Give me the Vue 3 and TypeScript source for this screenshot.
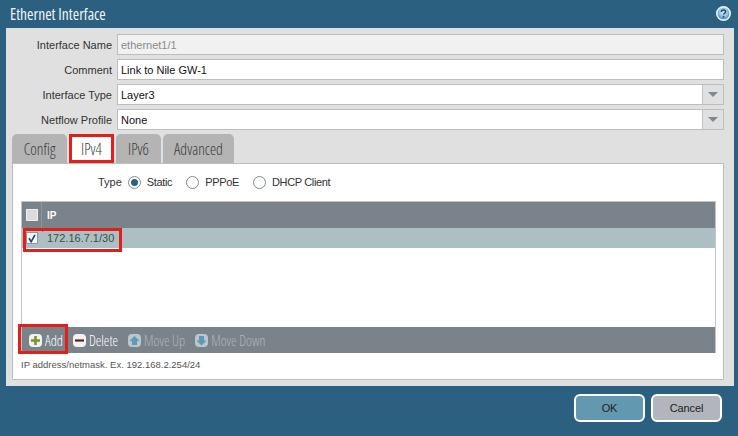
<script setup lang="ts">
const fields = [
  { label: 'Interface Name', value: 'ethernet1/1', kind: 'readonly' },
  { label: 'Comment', value: 'Link to Nile GW-1', kind: 'text' },
  { label: 'Interface Type', value: 'Layer3', kind: 'select' },
  { label: 'Netflow Profile', value: 'None', kind: 'select' },
]
const tabs = ['Config', 'IPv4', 'IPv6', 'Advanced']
const radios = [
  { label: 'Static', on: true },
  { label: 'PPPoE', on: false },
  { label: 'DHCP Client', on: false },
]
</script>

<template>
  <div class="dialog">
    <header class="title">
      <span class="narrow">Ethernet Interface</span>
      <svg class="help" width="17" height="17" viewBox="0 0 17 17">
        <defs>
          <radialGradient id="hg" cx="50%" cy="42%" r="60%">
            <stop offset="0" stop-color="#dcecf5" />
            <stop offset="0.55" stop-color="#8fbfdc" />
            <stop offset="1" stop-color="#1f6ea6" />
          </radialGradient>
        </defs>
        <circle cx="8.5" cy="8.5" r="6.7" fill="url(#hg)" stroke="#e4f1f8" stroke-width="1.7" />
        <path d="M6.4 6.9c0-1.2.9-2 2.1-2s2.1.8 2.1 1.8c0 1.5-2 1.5-2 2.9" fill="none" stroke="#174f7c" stroke-width="1.5" />
        <rect x="7.7" y="10.9" width="1.7" height="1.7" fill="#174f7c" />
      </svg>
    </header>

    <main class="panel">
      <div class="fields">
        <div v-for="f in fields" :key="f.label" class="field">
          <label class="flabel">{{ f.label }}</label>
          <div class="input" :class="f.kind">
            <span class="val">{{ f.value }}</span>
            <span v-if="f.kind === 'select'" class="arrow"><i></i></span>
          </div>
        </div>
      </div>

      <nav class="tabs">
        <div v-for="t in tabs" :key="t" class="tab narrow" :class="['tab-' + t, { active: t === 'IPv4' }]">{{ t }}</div>
      </nav>

      <section class="content">
        <div class="type-row">
          <span class="type-label">Type</span>
          <span v-for="r in radios" :key="r.label" class="radio-item">
            <span class="radio" :class="{ on: r.on }"></span>
            <span>{{ r.label }}</span>
          </span>
        </div>

        <div class="table">
          <div class="thead">
            <div class="cbcell"><span class="cb head"></span></div>
            <div class="th">IP</div>
          </div>
          <div class="row">
            <div class="cbcell">
              <span class="cb checked">
                <svg width="11" height="11" viewBox="0 0 11 11"><path d="M2.2 5.2 4.6 9 8.8 1.4" fill="none" stroke="#2a3f86" stroke-width="1.8" /></svg>
              </span>
            </div>
            <div class="td"><i class="dirty"></i>172.16.7.1/30</div>
            <div class="redbox rowbox"></div>
          </div>
          <div class="tbody"></div>
          <div class="toolbar">
            <button class="tool narrow">
              <span class="ico"><svg width="11" height="11" viewBox="0 0 11 11"><path d="M5.5 1v9M1 5.500h9" stroke="#7f9130" stroke-width="2.6" /></svg></span>
              Add
            </button>
            <button class="tool narrow">
              <span class="ico"><svg width="11" height="11" viewBox="0 0 11 11"><path d="M1 5.500h9" stroke="#5a2020" stroke-width="2.2" /></svg></span>
              Delete
            </button>
            <button class="tool narrow off">
              <span class="ico"><svg width="11" height="11" viewBox="0 0 11 11"><path d="M5.500 1 10.500 6H8v4H3V6H.5Z" fill="#5e9ab5" /></svg></span>
              Move Up
            </button>
            <button class="tool narrow off">
              <span class="ico"><svg width="11" height="11" viewBox="0 0 11 11"><path d="M5.500 10.500.5 5.500H3V1h5v4.500h2.500Z" fill="#5e9ab5" /></svg></span>
              Move Down
            </button>
            <div class="redbox addbox"></div>
          </div>
        </div>
        <p class="hint">IP address/netmask. Ex. 192.168.2.254/24</p>
      </section>
    </main>

    <footer class="actions">
      <button class="btn ok">OK</button>
      <button class="btn cancel">Cancel</button>
    </footer>
  </div>
</template>

<style>
html, body { margin: 0; padding: 0; }
</style>

<style scoped>
.dialog {
  width: 738px;
  height: 436px;
  background: #2c6080;
  display: flex;
  flex-direction: column;
  overflow: hidden;
  font-family: "Liberation Sans", Arial, sans-serif;
  font-size: 11px;
  color: #333;
}
.narrow {
  font-family: "Open Sans", "Noto Sans", sans-serif;
  font-stretch: 75%;
}
.title {
  height: 28px;
  flex: none;
  display: flex;
  align-items: center;
  justify-content: space-between;
  padding: 0 6px 0 10px;
  color: #f1f5f7;
  font-size: 15.5px;
}
.help { margin-top: -2px; }
.panel {
  margin: 0 4px 0 6px;
  height: 358px;
  flex: none;
  background: #e0e0e0;
  padding: 6px 10px 6px 6px;
  box-sizing: border-box;
  display: flex;
  flex-direction: column;
}
.fields { display: flex; flex-direction: column; gap: 4px; }
.field { display: flex; align-items: center; height: 21px; }
.flabel {
  width: 105px;
  box-sizing: border-box;
  text-align: right;
  padding-right: 5px;
  flex: none;
  color: #333;
}
.input {
  flex: 1;
  height: 21px;
  box-sizing: border-box;
  border: 1px solid #bdbdbd;
  background: #fff;
  display: flex;
  align-items: center;
  justify-content: space-between;
  color: #111;
}
.input.readonly { background: #f1f1f1; color: #8a8a8a; }
.val { padding-left: 3px; }
.arrow {
  width: 20px;
  height: 19px;
  background: #e0e0e0;
  border-left: 1px solid #c4c4c4;
  display: flex;
  align-items: center;
  justify-content: center;
}
.arrow i {
  width: 0;
  height: 0;
  border-left: 5px solid transparent;
  border-right: 5px solid transparent;
  border-top: 5px solid #7f8a90;
}
.tabs { display: flex; gap: 2px; margin-top: 4px; height: 29px; flex: none; }
.tab {
  background: #b4b4b4;
  border-radius: 5px 5px 0 0;
  color: #3c3c3c;
  display: flex;
  align-items: center;
  justify-content: center;
  font-size: 15.6px;
  font-weight: 300;
  box-sizing: border-box;
  padding-top: 1px;
}
.tab-Config { width: 55px; }
.tab-IPv4 { width: 45px; }
.tab-IPv6 { width: 45px; }
.tab-Advanced { width: 71px; }
.tab.active {
  background: #fff;
  border: 3px solid #e1201c;
  border-radius: 0;
}
.content {
  flex: 1;
  background: #fff;
  border: 1px solid #bdbdbd;
  padding: 0 7px 0 8px;
  display: flex;
  flex-direction: column;
}
.type-row {
  height: 37px;
  box-sizing: border-box;
  padding: 0 0 1px 77px;
  flex: none;
  display: flex;
  align-items: center;
  color: #333;
}
.type-label { margin-right: 6px; }
.radio-item { display: inline-flex; align-items: center; margin-right: 14px; gap: 6px; letter-spacing: -0.35px; }
.radio {
  width: 13px;
  height: 13px;
  box-sizing: border-box;
  border: 1px solid #7f8a90;
  border-radius: 50%;
  background: #fff;
  position: relative;
}
.radio.on::after {
  content: "";
  position: absolute;
  inset: 2px;
  border-radius: 50%;
  background: #2c6080;
}
.table {
  height: 152px;
  flex: none;
  border: 1px solid #c4c4c4;
  border-bottom: 0;
  display: flex;
  flex-direction: column;
  box-sizing: border-box;
}
.thead {
  height: 26px;
  background: #7a828a;
  display: flex;
  align-items: center;
  color: #fff;
  flex: none;
}
.cbcell {
  width: 19px;
  height: 100%;
  display: flex;
  align-items: center;
  justify-content: center;
  flex: none;
  border-right: 1px solid #8e959c;
}
.th { padding-left: 5px; font-weight: 700; font-size: 10px; }
.cb {
  width: 10px;
  height: 10px;
  border: 1px solid #8f9aa2;
  background: #f4f6f8;
  display: flex;
  align-items: center;
  justify-content: center;
}
.cb.head { background: #dcdcdc; border-color: #eee; }
.row {
  height: 20px;
  flex: none;
  background: #adbfc2;
  display: flex;
  align-items: center;
  position: relative;
}
.row .cbcell { border-right: none; width: 20px; }
.td { padding-left: 5px; color: #3a5046; position: relative; }
.dirty {
  position: absolute;
  left: 0;
  top: -3px;
  border-top: 3px solid #c8201c;
  border-right: 3px solid transparent;
}
.tbody { flex: 1; background: #fff; }
.toolbar {
  height: 26px;
  flex: none;
  background: #7a828a;
  display: flex;
  align-items: center;
  padding-left: 7px;
  gap: 10px;
  position: relative;
}
.tool {
  background: none;
  border: 0;
  padding: 0;
  color: #fff;
  font-size: 14px;
  font-weight: 300;
  display: inline-flex;
  align-items: center;
  gap: 3px;
}
.tool.off { color: #b0b5ba; }
.ico {
  width: 13px;
  height: 13px;
  background: #f2f2f2;
  border-radius: 4px;
  display: flex;
  align-items: center;
  justify-content: center;
}
.off .ico { background: #b8c6cf; }
.redbox {
  position: absolute;
  border: 3px solid #e1201c;
  box-sizing: border-box;
  pointer-events: none;
}
.rowbox { left: 1px; top: 0; width: 99px; height: 24px; }
.addbox { left: -4px; top: -3px; width: 50px; height: 30px; }
.hint {
  margin: 6px 0 0;
  font-size: 9.5px;
  color: #555;
}
.actions {
  flex: 1;
  display: flex;
  justify-content: flex-end;
  align-items: flex-start;
  gap: 6px;
  padding: 8px 16px 0 0;
}
.btn {
  width: 71px;
  height: 28px;
  border: 2px solid #fff;
  border-radius: 6px;
  font-family: "Liberation Sans", sans-serif;
  font-size: 11px;
  letter-spacing: -0.1px;
  color: #222;
  padding: 0;
}
.ok { background: #6298b0; }
.cancel { background: #b3b5bd; }
</style>
